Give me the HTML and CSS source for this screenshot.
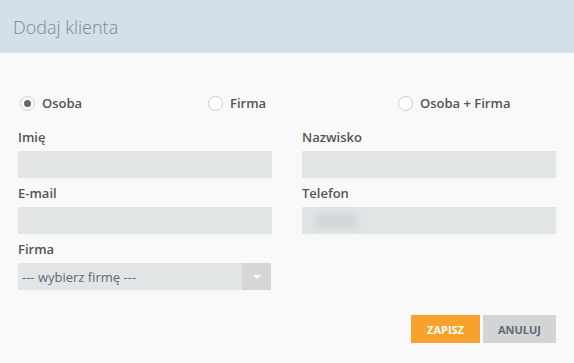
FILE: index.html
```html
<!DOCTYPE html>
<html lang="pl">
<head>
    <meta charset="UTF-8">
    <title>Dodaj klienta</title>
    <link rel="stylesheet" href="styles.css">
</head>
<body>
    <div class="modal">
        <div class="modal-header">
            <h1>Dodaj klienta</h1>
        </div>

        <div class="modal-body">
            <!-- Typ klienta -->
            <div class="radio-row">
                <label class="radio"><span class="dot checked"></span>Osoba</label>
                <label class="radio"><span class="dot"></span>Firma</label>
                <label class="radio"><span class="dot"></span>Osoba + Firma</label>
            </div>

            <div class="fields">
                <div class="field">
                    <label>Imię</label>
                    <div class="input"></div>
                </div>
                <div class="field">
                    <label>Nazwisko</label>
                    <div class="input"></div>
                </div>
                <div class="field">
                    <label>E-mail</label>
                    <div class="input"></div>
                </div>
                <div class="field">
                    <label>Telefon</label>
                    <div class="input"><span class="blurred"></span></div>
                </div>
                <div class="field">
                    <label>Firma</label>
                    <div class="select">
                        <span class="select-text">--- wybierz firmę ---</span>
                        <span class="select-arrow"></span>
                    </div>
                </div>
            </div>

            <div class="actions">
                <button class="btn btn-save">ZAPISZ</button>
                <button class="btn btn-cancel">ANULUJ</button>
            </div>
        </div>
    </div>
</body>
</html>
```

FILE: styles.css
```css
body {
    margin: 0;
    font-family: "Open Sans", Arial, sans-serif;
    background-color: #f9f9f9;
    color: #555;
}
.modal-header {
    background-color: #d3e0e9;
    height: 53px;
    padding: 0 13px;
    display: flex;
    align-items: center;
}
.modal-header h1 {
    margin: 0;
    font-size: 18px;
    font-weight: 300;
    color: #7b8995;
}
.modal-body {
    padding: 41px 18px 0 18px;
}
.radio-row {
    display: grid;
    grid-template-columns: 188px 190px 1fr;
    padding-left: 2px;
    height: 18px;
    align-items: center;
}
.radio {
    display: flex;
    align-items: center;
    font-size: 13px;
    font-weight: 600;
    color: #555;
}
.dot {
    width: 13px;
    height: 13px;
    border: 1px solid #cdcdcd;
    border-radius: 50%;
    background-color: #fff;
    margin-right: 7px;
    position: relative;
}
.dot.checked::after {
    content: "";
    position: absolute;
    left: 3px;
    top: 3px;
    width: 7px;
    height: 7px;
    border-radius: 50%;
    background-color: #666;
}
.fields {
    display: grid;
    grid-template-columns: 254px 254px;
    column-gap: 30px;
    row-gap: 4px;
    margin-top: 14px;
}
.field label {
    display: block;
    font-size: 13px;
    font-weight: 600;
    color: #555;
    height: 22px;
    line-height: 22px;
    margin-bottom: 3px;
}
.input {
    height: 27px;
    background-color: #e2e5e6;
    position: relative;
}
.blurred {
    position: absolute;
    left: 14px;
    top: 7px;
    width: 40px;
    height: 14px;
    background-color: #cfd3d5;
    filter: blur(4px);
}
.select {
    height: 27px;
    width: 253px;
    background-color: #e2e5e6;
    display: flex;
    align-items: center;
}
.select-text {
    flex: 1;
    padding-left: 4px;
    font-size: 13px;
    color: #5a6b7b;
}
.select-arrow {
    width: 29px;
    height: 27px;
    background-color: #d5d6d7;
    position: relative;
}
.select-arrow::after {
    content: "";
    position: absolute;
    left: 11px;
    top: 12px;
    border-left: 4px solid transparent;
    border-right: 4px solid transparent;
    border-top: 4px solid #fff;
}
.actions {
    display: flex;
    justify-content: flex-end;
    gap: 3px;
    margin-top: 25px;
}
.btn {
    border: none;
    height: 28px;
    font-family: "Open Sans", Arial, sans-serif;
    font-size: 11px;
    font-weight: 700;
    padding: 0;
}
.btn-save {
    width: 69px;
    background-color: #f6a22c;
    color: #fff;
}
.btn-cancel {
    width: 73px;
    background-color: #d3d4d6;
    color: #5b6b79;
}
```
